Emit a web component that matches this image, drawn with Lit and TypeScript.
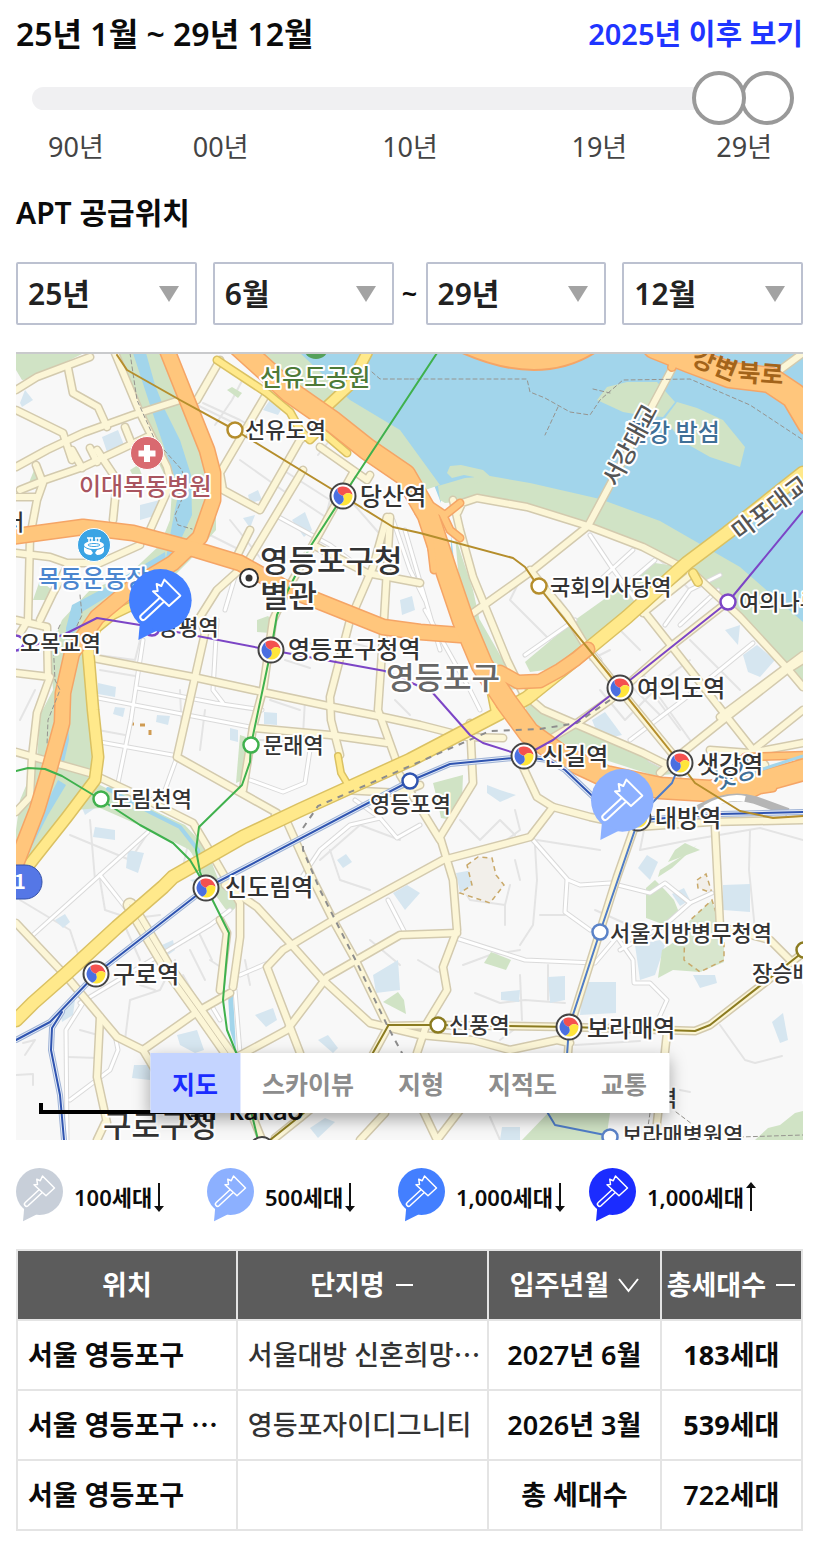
import { LitElement, html, svg, css } from "lit";
import { customElement, property, state } from "lit/decorators.js";

type Pt = string;

/* ---------- map geometry ---------- */

const PARKS: Pt[] = [
  "16,353 84,353 62,364 38,378 22,380 16,370",
  "118,353 137,400 152,450 172,490 170,520 160,545 128,575 90,590 62,620 50,650 53,690 40,715 37,760 20,800 16,830 16,875 30,870 70,800 92,778 92,700 86,650 95,625 150,600 190,560 216,530 216,480 200,440 180,390 165,353",
  "30,860 60,775 100,785 140,805 185,825 208,850 215,875 205,880 190,850 150,830 100,808 75,810 40,860",
  "262,353 300,353 350,400 400,430 440,485 425,490 370,450 320,405",
  "438,486 465,478 490,476 530,483 600,499 660,521 740,567 803,622 803,690 787,668 740,620 690,574 643,549 588,528 527,509 477,500 445,503 440,500",
  "447,473 450,466 461,465 483,470 492,478 474,484 474,477 464,475 452,478",
  "525,662 575,620 655,563 675,566 672,575 600,640 560,668 530,672",
  "522,690 545,712 600,733 650,753 680,765 690,772 655,776 590,755 545,735 527,715",
  "470,615 480,620 500,655 522,688 510,690 490,665 475,640",
  "455,535 463,560 473,590 484,640 470,620 458,570",
  "597,400 607,387 627,382 657,382 675,402 663,417 640,415 623,412",
  "677,402 697,408 723,420 745,447 740,467 710,457 680,440 665,418",
  "227,390 232,387 242,393 238,398",
  "257,620 268,616 273,621 270,633 257,632",
  "240,735 246,737 243,780 236,783",
  "433,783 463,775 462,800 452,820 441,818 436,795",
  "658,877 672,868 697,845 684,855 660,870",
  "646,888 655,880 665,890 674,900 680,915 665,925 646,918",
  "662,950 680,938 720,940 724,962 700,972 673,970 658,978",
  "484,963 491,952 511,960 506,970",
  "383,1002 398,992 404,1000 406,1014",
  "33,600 40,580 52,590 48,600",
  "522,1140 548,1113 610,1113 606,1140",
  "755,1140 768,1128 780,1125 795,1113 803,1111 803,1140",
  "130,470 138,465 142,475 135,480",
  "30,480 35,468 42,480 40,488 28,490",
  "668,862 700,850 685,843 675,850",
];

const BLOCKS: Pt[] = [
  "20,403 25,390 33,400 22,407",
  "102,437 118,430 124,445 107,452",
  "140,505 160,500 157,515 140,520",
  "263,410 272,397 285,403 278,415",
  "248,495 258,490 262,500 250,503",
  "292,520 305,512 312,530 304,537",
  "243,518 255,515 250,528",
  "98,683 116,687 115,697 98,694",
  "115,707 125,708 123,717 113,714",
  "157,715 170,716 168,725 156,722",
  "230,728 238,730 238,742 230,740",
  "264,712 277,713 277,725 264,724",
  "95,827 115,830 115,840 93,837",
  "128,850 144,853 138,873 126,868",
  "337,860 346,854 352,862 343,868",
  "80,803 98,806 85,815",
  "55,920 65,914 70,922 63,928",
  "162,945 173,940 175,950 168,955",
  "134,1065 150,1065 150,1080 132,1078",
  "177,1035 197,1030 204,1050 195,1053 180,1045",
  "318,1040 328,1035 338,1048 333,1053",
  "373,975 398,960 400,990 376,993",
  "255,1015 273,1008 277,1020 266,1027",
  "393,893 407,885 420,893 405,910",
  "592,720 605,712 622,735 600,740",
  "743,655 757,645 775,660 760,677 748,672",
  "725,630 740,625 738,645",
  "487,785 500,790 516,795 500,802 487,793",
  "638,868 647,855 658,862 650,880",
  "456,873 473,870 474,885 460,893",
  "723,885 750,884 750,912 723,910",
  "635,945 660,940 665,945 655,975 640,980",
  "583,982 616,982 616,1013 580,1015",
  "548,977 565,976 565,1000 550,1003",
  "501,992 520,990 519,1002 501,1000",
  "693,975 715,975 717,983 700,988",
  "772,1022 783,1013 788,1040 780,1043",
  "502,1127 520,1127 520,1140 500,1140",
  "310,1128 325,1118 335,1122 318,1138",
  "190,880 205,877 205,890",
  "60,1010 75,1000 73,1015 62,1022",
  "672,894 684,888 690,900 680,906",
  "400,600 412,596 415,610 402,615",
];

const LANES: Pt[] = [
  "203,403 240,420 262,433", "245,375 232,400 215,425", "197,405 248,430",
  "240,460 285,492 300,470", "283,470 330,500 320,540", "230,520 262,560",
  "210,535 240,550", "330,440 318,455", "350,500 385,540", "300,500 330,520",
  "98,655 135,660 140,640", "100,670 135,676", "98,730 125,735", "205,710 200,750",
  "180,690 182,735", "290,640 320,645", "305,700 303,735", "270,700 300,710",
  "340,640 372,648", "70,835 130,860 150,830", "90,820 95,880", "180,880 190,835",
  "260,740 322,743", "285,660 310,668", "320,860 360,825 400,840", "330,850 340,880 370,890",
  "395,700 410,715", "100,880 105,910 120,915 140,960", "20,900 70,930 80,960",
  "120,920 160,915", "175,960 160,990 130,1000 125,1040", "68,1057 98,1058",
  "80,1030 98,1035", "155,990 140,985", "200,935 212,960", "190,950 205,980",
  "183,975 200,1005", "210,960 225,970", "245,960 250,985", "370,940 400,965",
  "475,640 500,690", "590,660 610,650", "605,615 640,650", "560,600 590,640",
  "625,680 660,715", "640,670 690,740", "600,690 625,720 665,680", "690,640 740,690",
  "520,580 510,600 550,640", "660,560 690,590", "690,660 650,690 680,730",
  "515,860 520,880", "535,845 537,880 533,925 520,945", "540,915 565,915",
  "460,885 470,900 505,905 510,885", "505,905 505,925", "537,840 600,850",
  "463,965 490,955 520,950", "418,960 438,972", "475,993 500,1003 525,1000 565,1003",
  "520,975 522,1020", "548,965 548,1000", "520,1025 500,1040", "750,830 749,870 755,930",
  "595,910 640,930", "640,850 690,840 760,828 803,840", "720,1025 745,1060 755,1063 782,1056",
  "575,1045 640,1041", "680,1090 690,1092", "490,1117 500,1140", "645,825 640,850",
  "460,820 480,840 500,820 515,835", "515,810 520,830 500,845",
  "60,705 52,720 45,760", "35,690 20,720", "16,1075 33,1074 33,1085",
  "23,1043 35,1040 25,1055",
];

const STREETS: Pt[] = [
  "143,640 131,720 118,783", "137,688 215,703 262,710", "98,698 255,728", "100,742 178,756",
  "217,620 213,690 223,703", "177,757 165,790", "250,780 283,792 305,783 310,750",
  "275,515 330,545 350,560", "393,520 410,570 425,600", "240,560 225,610", "405,530 440,650",
  "355,800 380,818 397,838 420,825", "300,880 320,850 350,825 380,818",
  "33,935 100,875 148,832", "100,875 133,917", "80,1003 210,925 230,910", "83,1003 66,1030 67,1140",
  "240,975 275,960", "235,990 240,1053", "70,1100 110,1070 118,1050 115,1035",
  "388,900 405,933", "210,1003 220,1020",
  "456,938 525,960 595,963 617,937 633,960 634,983 650,983 667,1000 658,1020",
  "590,535 610,565 643,610", "633,550 600,580", "655,560 620,590", "630,740 683,700 753,643",
  "560,610 600,660", "525,655 575,620", "665,625 690,590 720,575", "533,840 568,880 580,885 610,883 650,893 665,883 690,903 712,893",
  "567,880 565,912 590,930", "690,903 665,925 620,950", "425,610 470,690 480,710", "650,760 690,780",
  "465,612 500,690", "718,590 680,625",
];

const ROADS: Pt[] = [
  "16,390 37,377 90,357", "68,368 73,393 98,407 107,427", "16,467 47,450 83,433 133,415 180,400",
  "16,410 63,433 72,460", "115,353 140,413 167,467 171,483 150,530", "20,490 45,480 83,467 147,437",
  "36,465 43,483 37,500 30,537 28,620 16,640", "97,450 117,480 113,520", "125,427 131,442",
  "72,450 82,468", "90,448 97,462", "16,553 50,557 67,563 100,563 140,545", "67,567 53,593 40,620",
  "16,497 37,497", "220,360 197,400", "267,393 220,473 223,490 260,510 300,440 320,425",
  "250,530 235,560", "303,470 247,563 217,590 200,617 205,633 177,757 277,813",
  "353,473 310,550 287,590 273,620 263,690 253,727 243,790", "320,447 367,480 370,475",
  "317,547 367,573 420,583", "387,517 373,567 350,620 330,697 331,720 340,755",
  "390,517 383,637 378,710 397,763", "93,658 193,677 253,690 333,707 383,717 420,725 467,737 503,738",
  "253,728 330,735 387,743", "16,673 50,677 37,713 32,757 30,797 16,812", "16,620 47,627 48,677",
  "16,752 90,773 133,793 193,823 217,863 240,903 240,937 233,987", "275,815 287,822 313,880 333,920 357,963 388,1027",
  "343,790 400,793 420,785", "453,500 460,530 473,577 507,660 523,693 543,710 643,753 667,765",
  "643,610 677,653 727,717 765,765", "545,742 577,723 610,700 670,647 730,600", "660,773 677,757 727,717 787,670 803,660",
  "458,512 462,503 477,498 527,507 588,526 643,547 693,573 740,617 787,668 803,687",
  "673,367 588,526 533,570 473,613", "530,570 567,615 590,653 620,690 680,763", "693,573 643,613",
  "803,743 750,753 710,750", "523,767 537,797 553,807 590,817 637,827 710,822 803,820",
  "553,807 530,837 443,860 333,920 283,950 267,967 300,1053", "470,723 473,783 440,837 453,880 457,930 443,967 447,990 427,1023 417,1053",
  "400,775 440,840", "637,820 617,877 570,1027 568,1053", "715,827 720,927 770,940 793,963",
  "16,923 67,977 97,1013 117,1037 143,1050 200,1010 230,993", "143,1050 155,1070", "100,1017 97,1077 107,1123",
  "105,1123 97,1140", "220,920 227,933 220,990", "225,885 257,907 290,943 323,980 370,1023 420,1035 473,1040 510,1050 557,1040 570,1043",
  "457,933 400,935 327,977 287,1030 237,1057", "388,1026 438,1025 570,1027 695,1031 710,1025 803,953",
  "388,1027 370,1060 300,1118 275,1138", "667,1033 663,1070 655,1140", "418,1100 437,1140 460,1110",
  "250,1110 262,1140", "360,1140 385,1113", "720,717 803,655", "753,750 803,710", "803,353 780,370",
];

const WIDE_ROADS: Pt[] = [
  "130,905 167,967 200,1013 240,1070",
];

const YELLOWS: [Pt, number][] = [
  ["803,473 727,533 687,563 627,617 593,645 527,698 500,713 410,760 300,810 243,837 173,877 163,887 117,927 67,973 33,1003 16,1020", 12],
  ["88,650 93,710 98,757 95,780 67,817 33,860 16,882", 10],
  ["217,360 267,393 290,412 300,430 310,440 320,430 347,453", 6],
  ["367,353 350,385 323,410", 9],
  ["338,756 341,773 347,783", 5],
  ["134,605 113,615 97,628 88,650", 7],
  ["693,573 698,582", 7],
  ["490,690 495,715", 5],
];

const HIGHWAYS: [Pt, number][] = [
  ["165,345 187,400 207,450 213,473 213,500 200,537 173,563 133,587 97,617 72,653 63,693 62,723 50,767 37,810 16,864", 14],
  ["10,537 83,527 133,533 197,550 240,563 283,587 333,607 383,627 420,632 460,635", 14],
  ["238,345 290,392 333,422 367,449 405,475 428,515 446,570 463,620 482,665 507,703 529,733 560,755 605,776 660,788 710,791 760,782 810,768", 20],
  ["500,672 518,682 540,681 560,670 576,659 588,649", 12],
  ["430,505 445,515 460,503", 6],
  ["443,515 450,530 460,538", 6],
  ["418,495 418,512", 5],
  ["430,535 434,570", 6],
  ["745,757 810,755", 6],
  ["750,795 760,790 773,788", 6],
  ["672,367 674,362", 7],
  ["655,346 690,360 730,375 770,380 794,396 810,423", 24],
];

const SUBWAYS: [Pt, string, number][] = [
  ["117,355 127,370 180,400 235,430 343,496 393,527 420,533 513,558 525,567 538,586 557,610 620,688 680,763 695,783 740,811 773,818 803,816", "#b58e2c", 2],
  ["388,1025 438,1025 570,1027 695,1031 710,1025 803,952", "#8b7b20", 2],
  ["388,1026 370,1058 300,1116 270,1140", "#8b7b20", 2],
  ["16,771 28,768 45,769 62,776 100,799 140,825 173,843 190,860 206,887", "#3fb14d", 2],
  ["437,353 343,496 310,547 288,590 277,615 271,650 251,745 250,762 242,785 199,827 196,850 200,872 206,887 229,933 226,965 223,1000 227,1030 240,1062 252,1115 258,1140", "#3fb14d", 2],
  ["16,643 35,645 65,634 97,618 140,625 270,650 385,671 432,692 470,735 483,743 524,756 553,740 620,688 728,602 803,511", "#7c45c6", 2],
  ["680,763 672,783 640,815 600,932 569,1027 567,1055", "#4f7cc7", 2],
  ["546,1110 555,1125 610,1136", "#4f7cc7", 2],
];

const RAILS: Pt[] = [
  "16,1040 50,1022 97,973 206,888 410,781 450,764 524,757 548,760 565,770 605,808 640,820 720,814 803,812",
  "62,1012 52,1028 51,1050 60,1095 64,1140",
];

const DASHED: Pt[] = [
  "610,700 577,723 540,729 490,731 410,766 318,806 303,828 303,850 320,890 357,963 388,1027 403,1055",
];

const TRAILS: Pt[] = [
  "130,353 137,400 155,440 182,470 186,490 175,515 178,525 192,529",
  "410,379 527,379 530,392 545,398 570,412 590,415 600,400 623,380 690,379 750,405 803,440",
  "558,407 545,435", "593,389 610,393", "372,372 380,379 410,379",
  "60,625 53,640 55,680 60,690 48,720 47,745", "80,595 82,615 75,630",
  "676,1112 700,1130 740,1137 803,1135", "650,1113 646,1140",
];

interface Station { x: number; y: number; name: string; color?: string; tx: number; ty: number }

const STATIONS: Station[] = [
  { x: 235, y: 430, name: "선유도역", color: "#b58e2c", tx: 245, ty: 438 },
  { x: 343, y: 496, name: "당산역", tx: 360, ty: 505 },
  { x: 271, y: 650, name: "영등포구청역", tx: 288, ty: 658 },
  { x: 251, y: 745, name: "문래역", color: "#3fb14d", tx: 263, ty: 753 },
  { x: 101, y: 799, name: "도림천역", color: "#3fb14d", tx: 111, ty: 807 },
  { x: 410, y: 781, name: "영등포역", color: "#2f54b0", tx: 370, ty: 812 },
  { x: 206, y: 888, name: "신도림역", tx: 225, ty: 896 },
  { x: 96, y: 974, name: "구로역", tx: 113, ty: 983 },
  { x: 438, y: 1025, name: "신풍역", color: "#8b7b20", tx: 449, ty: 1033 },
  { x: 569, y: 1027, name: "보라매역", tx: 587, ty: 1037 },
  { x: 600, y: 932, name: "서울지방병무청역", color: "#5a82c8", tx: 610, ty: 941 },
  { x: 524, y: 756, name: "신길역", tx: 542, ty: 765 },
  { x: 680, y: 763, name: "샛강역", tx: 697, ty: 773 },
  { x: 620, y: 688, name: "여의도역", tx: 637, ty: 697 },
  { x: 539, y: 586, name: "국회의사당역", color: "#b58e2c", tx: 550, ty: 595 },
  { x: 728, y: 602, name: "여의나루역", color: "#7c45c6", tx: 739, ty: 610 },
  { x: 638, y: 818, name: "대방역", tx: 655, ty: 827 },
  { x: 804, y: 950, name: "장승배기역", color: "#8b7b20", tx: 752, ty: 981 },
  { x: 610, y: 1137, name: "보라매병원역", color: "#5a82c8", tx: 622, ty: 1143 },
  { x: 16, y: 643, name: "오목교역", color: "#7c45c6", tx: 20, ty: 651 },
  { x: 152, y: 628, name: "양평역", color: "#7c45c6", tx: 158, ty: 635 },
];

/* ---------- household marker ---------- */

const markerShape = (color: string) => svg`
  <g fill=${color}>
    <circle cx="94" cy="94" r="94"></circle>
    <path d="M33 158 28 213 82 186Z"></path>
  </g>
  <g fill="none" stroke="#fff" stroke-width="6" stroke-linejoin="round" stroke-linecap="round">
    <path d="M106 32 154 80 120 111 72 67 86 66 83 45 97 51Z"></path>
    <path d="M92 87 37 138a8 8 0 0 0 11 13L104 99"></path>
  </g>`;

@customElement("household-marker")
class HouseholdMarker extends LitElement {
  @property() color = "#000";
  static styles = css`
    :host { display: block; width: 47px; }
    .pin { display: block; width: 100%; }
  `;
  render() {
    return html`<svg class="pin" viewBox="0 0 188 214" aria-hidden="true">${markerShape(this.color)}</svg>`;
  }
}

/* ---------- map ---------- */

@customElement("district-map")
class DistrictMap extends LitElement {
  @state() private view = "지도";

  static styles = css`
    :host { display: block; position: relative; border-top: 2px solid #c9cacc; }
    .canvas { display: block; width: 100%; font-family: "Noto Sans CJK KR", sans-serif; font-weight: 500; }
    .label { paint-order: stroke; stroke: #fff; stroke-width: 4px; stroke-linejoin: round; fill: #333; font-size: 22px; }
    .major { font-size: 24px; }
    .place { font-size: 31px; }
    .district { fill: #666; }
    .bridge { fill: #555; font-size: 24px; }
    .hospital { fill: #a95560; font-size: 24px; }
    .stadium { fill: #4b86cf; font-size: 24px; }
    .park { fill: #4d7a37; font-size: 24px; }
    .island { fill: #3f6f97; font-size: 24px; }
    .highway { fill: #a3641a; stroke: none; font-size: 25px; font-weight: 700; }
    .shield { fill: #fff; stroke: none; font-size: 20px; font-weight: 700; }
    .brand { fill: #111; stroke: none; font: 700 28px Lato, sans-serif; }
    .views {
      position: absolute; left: 50%; bottom: 27px; transform: translateX(-50%);
      display: flex; background: #fff; box-shadow: 0 6px 16px rgba(0, 0, 0, 0.35);
    }
    .view {
      border: 0; background: none; padding: 0 22px; height: 60px; color: #8d8d8d; white-space: nowrap;
      font: 700 25px/58px "Noto Sans CJK KR", sans-serif; cursor: pointer;
    }
    .view.on { background: #c4d4ff; color: #1b2cff; }
  `;

  private lines(list: Pt[], color: string, width: number) {
    return svg`<g fill="none" stroke=${color} stroke-width=${width} stroke-linejoin="round" stroke-linecap="round">
      ${list.map((p) => svg`<polyline points=${p}></polyline>`)}</g>`;
  }

  private cased(list: [Pt, number][], edge: string, fill: string) {
    return svg`
      ${list.map(([p, w]) => this.lines([p], edge, w + 3))}
      ${list.map(([p, w]) => this.lines([p], fill, w))}`;
  }

  private dot(s: Station) {
    if (s.color) {
      return svg`<circle cx=${s.x} cy=${s.y} r="7.5" fill="#fff" stroke=${s.color} stroke-width="2.5"></circle>`;
    }
    return svg`<g transform="translate(${s.x} ${s.y})">
      <circle r="12.5" fill="#fff" stroke="#444" stroke-width="2"></circle>
      <g transform="rotate(-6)">
        <path d="M0 0Q-6-2.500-4.750-8.200A9.500 9.500 0 0 1 9.500 0Q5-5 0 0Z" fill="#f4514f"></path>
        <path d="M0 0Q5-5 9.500 0A9.500 9.500 0 0 1-4.750 8.200Q2 6.500 0 0Z" fill="#ffe53b"></path>
        <path d="M0 0Q2 6.500-4.750 8.200A9.500 9.500 0 0 1-4.750-8.200Q-6-2.500 0 0Z" fill="#4a6fe0"></path>
      </g>
    </g>`;
  }

  private drawing() {
    return svg`
      <rect x="16" y="354" width="787" height="786" fill="#f8f8f8"></rect>
      ${this.lines(LANES, "#e4e4e4", 2)}
      <g fill="#d6e6f0">${BLOCKS.map((p) => svg`<polygon points=${p}></polygon>`)}</g>
      <polygon fill="#a2d5eb" points="290,353 803,353 803,642 760,600 740,570 690,542 660,522 600,500 530,484 480,478 441,488 441,503 434,485 425,470 380,440 345,410 320,385"></polygon>
      <g fill="#d0e3c5">${PARKS.map((p) => svg`<polygon points=${p}></polygon>`)}</g>
      <g fill="#a2d5eb">
        <path d="M133 353H146L155 385 165 410 180 440 191 475 192 515 176 550 166 558 172 525 179 490 165 450 150 405Z"></path>
        <path d="M165 552 166 560 140 582 110 595 82 612 76 630 66 640 66 628 72 605 110 585Z"></path>
        <path d="M67 700 69 740 64 762 58 758 63 715Z"></path>
        <path d="M58 780 66 785 48 815 30 850 36 820 48 800Z"></path>
        <path d="M228 995H233L236 1050 230 1030Z"></path>
        <path d="M451 535 454 560 451 570Z"></path>
      </g>
      ${this.lines(["113,792 150,815 180,830 203,857 212,880 230,905"], "#d0e3c5", 12)}
      ${this.lines(["108,789 150,812 180,827 198,850 200,865"], "#a2d5eb", 4)}
      <g fill="#f2efea" stroke="#c9a96a" stroke-width="1.5" stroke-dasharray="5 4">
        <path d="M467 865 478 857 492 858 496 875 504 885 490 903 460 893 472 885Z"></path>
        <path d="M697 880 706 874 712 893 698 888Z"></path>
        <path d="M685 925 712 900 724 938 724 960 700 972 684 960Z" fill="#d8e6cd"></path>
      </g>
      <path d="M129 724h5m6 1h5m5 5v5" fill="none" stroke="#cf9b52" stroke-width="3"></path>
      ${this.lines(STREETS, "#dadada", 5)}
      ${this.lines(STREETS, "#ffffff", 3)}
      ${this.lines(ROADS, "#d3caae", 9)}
      ${this.lines(WIDE_ROADS, "#d3caae", 15)}
      ${this.lines(ROADS, "#fcf6d7", 6)}
      ${this.lines(WIDE_ROADS, "#fcf6d7", 12)}
      ${this.lines(WIDE_ROADS, "#d3caae", 1)}
      ${this.cased(YELLOWS, "#dac163", "#ffe98b")}
      <path d="M460 352Q540 388 596 352Z" fill="#ffc67c" stroke="#f5a566" stroke-width="2"></path>
      ${this.cased(HIGHWAYS, "#f5a566", "#ffc67c")}
      <path d="M698 809Q728 792 755 800L788 812" fill="none" stroke="#b5b5b5" stroke-width="8"></path>
      <path d="M705 808Q728 795 745 799" fill="none" stroke="#fff" stroke-width="6"></path>
      <path d="M745 775 772 766 803 756" fill="none" stroke="#a2d5eb" stroke-width="3"></path>
      <g stroke-dasharray="4 3">${this.lines(TRAILS, "#96948f", 1)}</g>
      <g stroke-dasharray="6 6">${DASHED.map((p) => svg`<polyline points=${p} fill="none" stroke="#8d8d8d" stroke-width="2"></polyline>`)}</g>
      ${this.lines(RAILS, "#9fb3d6", 6)}
      ${this.lines(RAILS, "#e6edf8", 4)}
      ${this.lines(RAILS, "#2f54b0", 2)}
      ${SUBWAYS.map(([p, c, w]) => this.lines([p], c, w))}
      <circle cx="316" cy="346" r="13" fill="#55a05a"></circle>
      <circle cx="262" cy="1149" r="12" fill="#fff" stroke="#444" stroke-width="2"></circle>

      <text class="label district place" x="386" y="689">영등포구</text>
      <text class="label island" x="626" y="441">한강 밤섬</text>
      <text class="label bridge" transform="translate(617 488) rotate(-62)">서강대교</text>
      <text class="label bridge" transform="translate(740 541) rotate(-37)">마포대교</text>
      <text class="label highway" transform="translate(690 364) rotate(22)">강변</text>
      <text class="label highway" transform="translate(737 381) rotate(4)">북로</text>
      <text class="label island" transform="translate(716 790) rotate(-20)">샛강</text>
      <text class="label park" x="260" y="386">선유도공원</text>
      <text class="label hospital" x="79" y="495">이대목동병원</text>
      <text class="label stadium" x="38" y="587">목동운동장</text>
      <text class="label place" x="260" y="572">영등포구청</text>
      <text class="label place" x="260" y="607">별관</text>
      <text class="label" x="4" y="530">터</text>
      <text class="label place" x="103" y="1137">구로구청</text>
      <text class="label" x="657" y="1106">역</text>
      ${STATIONS.map((s) => this.dot(s))}
      ${STATIONS.map((s) => svg`<text class=${s.color ? "label" : "label major"} x=${s.tx} y=${s.ty}>${s.name}</text>`)}

      <circle cx="249" cy="578" r="9" fill="#fff" stroke="#333" stroke-width="2"></circle>
      <circle cx="249" cy="578" r="3.5" fill="#333"></circle>
      <circle cx="147" cy="453" r="16.5" fill="#d96a70" stroke="#fff"></circle>
      <path d="M147 445v17M138.500 453.500h17" stroke="#fff" stroke-width="6"></path>
      <circle cx="94" cy="545" r="16.500" fill="#3ba4e4" stroke="#fff"></circle>
      <ellipse cx="94" cy="545" rx="10" ry="4" fill="#fff"></ellipse>
      <path d="M84 547q4 3 7 3l2 3-2 2q-6 0-7-4ZM104 547q-4 3-7 3l-2 3 2 2q6 0 7-4Z" fill="#fff"></path>
      <path d="M89 544v-6m3 6v-6m4 6v-6m3 6v-6M87 538h6m2 0h6" fill="none" stroke="#fff" stroke-width="1.500"></path>
      <ellipse cx="94" cy="545" rx="6" ry="1.500" fill="none" stroke="#3ba4e4"></ellipse>
      <rect x="-8" y="865" width="50" height="34" rx="17" fill="#5577e6" stroke="#3552a8"></rect>
      <text class="shield" x="14" y="889">1</text>

      <path d="M41 1103V1112H215" fill="none" stroke="#000" stroke-width="4"></path>
      <text class="brand" x="178" y="1120">km</text>
      <text class="brand" x="229" y="1120">kakao</text>

      <g transform="translate(129 569) scale(.3333)">${markerShape("#437fff")}</g>
      <g transform="translate(591 769) scale(.3333)">${markerShape("#8cb0ff")}</g>`;
  }

  render() {
    return html`
      <svg class="canvas" viewBox="16 354 787 786" role="img" aria-label="영등포구 지도">${this.drawing()}</svg>
      <div class="views" role="group" aria-label="지도 종류">
        ${["지도", "스카이뷰", "지형", "지적도", "교통"].map(
          (v) => html`<button class="view ${v === this.view ? "on" : ""}" @click=${() => (this.view = v)}>${v}</button>`
        )}
      </div>`;
  }
}

/* ---------- page ---------- */

const range = (from: number, to: number, unit: string) =>
  Array.from({ length: to - from + 1 }, (_, i) => `${from + i}${unit}`);

const PERIOD = [
  { id: "from-year", label: "시작 연도", value: "25년", options: range(20, 29, "년") },
  { id: "from-month", label: "시작 월", value: "6월", options: range(1, 12, "월") },
  { id: "to-year", label: "종료 연도", value: "29년", options: range(20, 29, "년") },
  { id: "to-month", label: "종료 월", value: "12월", options: range(1, 12, "월") },
];

const LEGEND = [
  { color: "#c8cfd9", text: "100세대", up: false },
  { color: "#8cb0ff", text: "500세대", up: false },
  { color: "#437fff", text: "1,000세대", up: false },
  { color: "#1b2cff", text: "1,000세대", up: true },
];

const ROWS = [
  { place: "서울 영등포구", more: false, name: "서울대방 신혼희망", cut: true, date: "2027년 6월", count: "183세대", strong: true },
  { place: "서울 영등포구 ", more: true, name: "영등포자이디그니티", cut: false, date: "2026년 3월", count: "539세대", strong: true },
  { place: "서울 영등포구", more: false, name: "", cut: false, date: "총 세대수", count: "722세대", strong: false },
];

@customElement("app-root")
class AppRoot extends LitElement {
  static styles = css`
    :host {
      display: block; box-sizing: border-box; padding: 16px 24px 24px 16px; background: #fff; color: #0b0b0b;
      font-family: "Noto Sans", "Noto Sans CJK KR", sans-serif; font-size: 27px;
    }
    .top { display: flex; justify-content: space-between; align-items: center; line-height: 36px; }
    .span { margin: 0; font-size: 32px; font-weight: 600; }
    .since { font-size: 29px; font-weight: 600; color: #1f35ff; text-decoration: none; }
    .slider { display: grid; align-items: center; margin: 19px 9px 0 16px; height: 54px; }
    .track { grid-area: 1 / 1; height: 23px; border-radius: 12px; background: #f0f0f2; }
    .thumb { grid-area: 1 / 1; width: 100%; height: 54px; margin: 0; appearance: none; background: none; pointer-events: none; }
    .thumb::-webkit-slider-runnable-track { height: 54px; background: none; }
    .thumb::-webkit-slider-thumb {
      appearance: none; box-sizing: border-box; width: 54px; height: 54px; border-radius: 50%;
      border: 4px solid #999; background: #fff; pointer-events: auto;
    }
    .low { z-index: 1; }
    .ticks {
      display: grid; grid-template-columns: auto 2fr auto 3fr auto 3fr auto 2fr auto;
      padding: 0 31px 0 32px; margin-top: 4px; line-height: 36px; color: #444;
    }
    .tick:nth-child(2) { grid-column: 3; }
    .tick:nth-child(3) { grid-column: 5; }
    .tick:nth-child(4) { grid-column: 7; }
    .tick:nth-child(5) { grid-column: 9; }
    .title { margin: 30px 0 0; font-size: 30px; line-height: 36px; font-weight: 600; }
    .period { display: flex; align-items: center; margin-top: 31px; }
    .field { flex: 1 1 0; display: grid; align-items: center; min-width: 0; }
    .field + .field { margin-left: 16px; }
    .tilde { width: 32px; text-align: center; font-weight: 600; }
    .select {
      grid-area: 1 / 1; width: 100%; height: 63px; box-sizing: border-box; padding: 0 10px; appearance: none;
      border: 2px solid #bcc1d0; border-radius: 2px; background: #fff; color: #222; font: inherit; font-size: 30px; font-weight: 600;
    }
    .caret { grid-area: 1 / 1; justify-self: end; margin-right: 18px; width: 20px; height: 16px; fill: #a3a3a3; pointer-events: none; }
    .map { margin-top: 27px; }
    .legend { display: grid; grid-template-columns: repeat(4, 1fr); margin: 28px 23px 0 0; padding: 0; list-style: none; }
    .item { display: flex; align-items: center; gap: 11px; white-space: nowrap; font-size: 22px; font-weight: 600; line-height: 30px; }
    .amount { display: flex; align-items: center; padding-top: 4px; }
    .arrow { width: 14px; height: 30px; fill: #111; }
    .arrow.up { transform: rotate(180deg); }
    .table { width: 100%; margin-top: 27px; border-collapse: collapse; table-layout: fixed; font-weight: 500; }
    .w-place { width: 28%; }
    .w-name { width: 32%; }
    .w-date { width: 22%; }
    .th, .td { height: 68px; padding: 0; border: 2px solid #e4e4e4; line-height: 36px; text-align: center; white-space: nowrap; }
    .th { background: #5c5c5c; color: #fff; font-weight: 600; }
    .sort { display: inline-flex; align-items: center; gap: 9px; padding: 0; border: 0; background: none; color: inherit; font: inherit; }
    .mark { width: 21px; height: 18px; fill: none; stroke: #fff; stroke-width: 2; }
    .left { padding-left: 10px; text-align: left; }
    .name { color: #333; }
    .count, .place, .date { font-weight: 600; }
    .strong { font-weight: 700; }
    .dots { font-family: "Noto Sans CJK KR", sans-serif; }
  `;

  private field(i: number) {
    const f = PERIOD[i];
    return html`<div class="field">
      <select class="select" id=${f.id} aria-label=${f.label}>
        ${f.options.map((o) => html`<option ?selected=${o === f.value}>${o}</option>`)}
      </select>
      <svg class="caret" viewBox="0 0 20 16" aria-hidden="true"><path d="M0 0H20L10 16Z"></path></svg>
    </div>`;
  }

  private heading(text: string, mark: string) {
    return html`<button class="sort">${text}<svg class="mark" viewBox="0 0 21 18" aria-hidden="true"><path d=${mark}></path></svg></button>`;
  }

  render() {
    return html`
      <header class="top">
        <h1 class="span">25년 1월 ~ 29년 12월</h1>
        <a class="since" href="#since">2025년 이후 보기</a>
      </header>
      <div class="slider">
        <div class="track"></div>
        <input class="thumb" type="range" min="0" max="44" value="44" aria-label="종료 시점" />
        <input class="thumb low" type="range" min="0" max="44" value="41" aria-label="시작 시점" />
      </div>
      <div class="ticks">
        ${["90년", "00년", "10년", "19년", "29년"].map((t) => html`<span class="tick">${t}</span>`)}
      </div>

      <h2 class="title">APT 공급위치</h2>
      <div class="period">
        ${this.field(0)}${this.field(1)}<span class="tilde">~</span>${this.field(2)}${this.field(3)}
      </div>

      <district-map class="map"></district-map>

      <ul class="legend">
        ${LEGEND.map((l) => html`<li class="item">
          <household-marker color=${l.color}></household-marker>
          <span class="amount">${l.text}<svg class="arrow ${l.up ? "up" : ""}" viewBox="0 0 14 30" role="img" aria-label=${l.up ? "이상" : "이하"}><path d="M6 1H8V24H12L7 30 2 24H6Z"></path></svg></span>
        </li>`)}
      </ul>

      <table class="table">
        <colgroup><col class="w-place" /><col class="w-name" /><col class="w-date" /><col /></colgroup>
        <thead>
          <tr>
            <th class="th" scope="col">위치</th>
            <th class="th" scope="col">${this.heading("단지명", "M2 9H19")}</th>
            <th class="th" scope="col">${this.heading("입주년월", "M1 3 10.500 15 20 3")}</th>
            <th class="th" scope="col">${this.heading("총세대수", "M1 9H20")}</th>
          </tr>
        </thead>
        <tbody>
          ${ROWS.map((r) => html`<tr>
            <td class="td left place">${r.place}${r.more ? html`<span class="dots">…</span>` : ""}</td>
            <td class="td left name">${r.name}${r.cut ? html`<span class="dots">…</span>` : ""}</td>
            <td class="td date">${r.date}</td>
            <td class="td count ${r.strong ? "strong" : ""}">${r.count}</td>
          </tr>`)}
        </tbody>
      </table>`;
  }
}
